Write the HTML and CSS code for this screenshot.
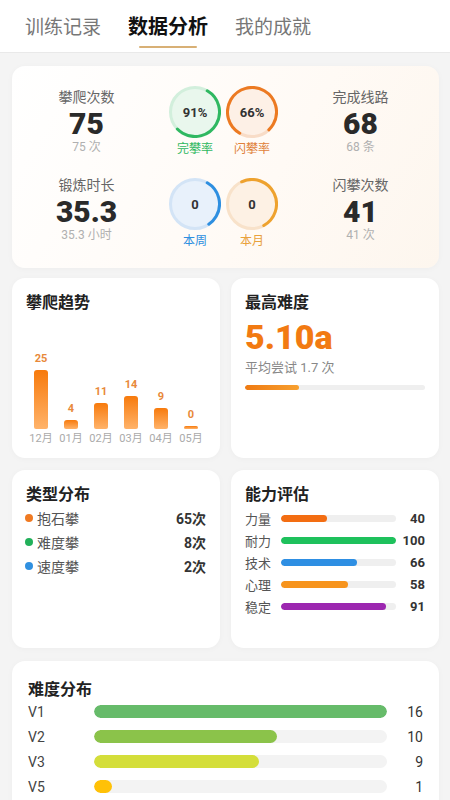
FILE: index.html
```html
<!DOCTYPE html>
<html lang="zh-CN">
<head>
  <meta charset="UTF-8">
  <meta name="viewport" content="width=device-width, initial-scale=1.0">
  <title>数据分析</title>
  <link rel="stylesheet" href="styles.css">
</head>
<body>
  <div class="tabs">
    <span class="tab">训练记录</span>
    <span class="tab active">数据分析</span>
    <span class="tab">我的成就</span>
  </div>

  <div class="page">
    <!-- 总览 -->
    <div class="card overview">
      <div class="stat">
        <div class="stat-label">攀爬次数</div>
        <div class="stat-num">75</div>
        <div class="stat-sub">75 次</div>
      </div>
      <div class="rings">
        <div class="ring green">
          <div class="ring-box">
            <svg class="ring-svg" viewBox="0 0 52 52">
              <circle class="ring-track" cx="26" cy="26" r="24.5"/>
              <circle class="ring-arc" cx="26" cy="26" r="24.5" stroke-dasharray="83.4 154" transform="rotate(-60 26 26)"/>
            </svg>
            <span class="ring-val">91%</span>
          </div>
          <div class="ring-label">完攀率</div>
        </div>
        <div class="ring orange">
          <div class="ring-box">
            <svg class="ring-svg" viewBox="0 0 52 52">
              <circle class="ring-track" cx="26" cy="26" r="24.5"/>
              <circle class="ring-arc" cx="26" cy="26" r="24.5" stroke-dasharray="121.9 154" transform="rotate(120 26 26)"/>
            </svg>
            <span class="ring-val">66%</span>
          </div>
          <div class="ring-label">闪攀率</div>
        </div>
      </div>
      <div class="stat">
        <div class="stat-label">完成线路</div>
        <div class="stat-num">68</div>
        <div class="stat-sub">68 条</div>
      </div>

      <div class="stat">
        <div class="stat-label">锻炼时长</div>
        <div class="stat-num">35.3</div>
        <div class="stat-sub">35.3 小时</div>
      </div>
      <div class="rings lower">
        <div class="ring blue">
          <div class="ring-box">
            <svg class="ring-svg" viewBox="0 0 52 52">
              <circle class="ring-track" cx="26" cy="26" r="24.5"/>
              <circle class="ring-arc" cx="26" cy="26" r="24.5" stroke-dasharray="49.2 154" transform="rotate(-60 26 26)"/>
            </svg>
            <span class="ring-val">0</span>
          </div>
          <div class="ring-label">本周</div>
        </div>
        <div class="ring amber">
          <div class="ring-box">
            <svg class="ring-svg" viewBox="0 0 52 52">
              <circle class="ring-track" cx="26" cy="26" r="24.5"/>
              <circle class="ring-arc" cx="26" cy="26" r="24.5" stroke-dasharray="74.8 154" transform="rotate(245 26 26)"/>
            </svg>
            <span class="ring-val">0</span>
          </div>
          <div class="ring-label">本月</div>
        </div>
      </div>
      <div class="stat">
        <div class="stat-label">闪攀次数</div>
        <div class="stat-num">41</div>
        <div class="stat-sub">41 次</div>
      </div>
    </div>

    <!-- 趋势 / 最高难度 -->
    <div class="row row-a">
      <div class="card half">
        <div class="card-title">攀爬趋势</div>
        <div class="chart">
          <div class="col"><span class="col-val">25</span><div class="col-bar" style="height: 59px"></div><span class="col-month">12月</span></div>
          <div class="col"><span class="col-val">4</span><div class="col-bar" style="height: 9px"></div><span class="col-month">01月</span></div>
          <div class="col"><span class="col-val">11</span><div class="col-bar" style="height: 26px"></div><span class="col-month">02月</span></div>
          <div class="col"><span class="col-val">14</span><div class="col-bar" style="height: 33px"></div><span class="col-month">03月</span></div>
          <div class="col"><span class="col-val">9</span><div class="col-bar" style="height: 21px"></div><span class="col-month">04月</span></div>
          <div class="col"><span class="col-val">0</span><div class="col-bar" style="height: 3px"></div><span class="col-month">05月</span></div>
        </div>
      </div>
      <div class="card half">
        <div class="card-title">最高难度</div>
        <div class="max-grade">5.10a</div>
        <div class="max-sub">平均尝试 1.7 次</div>
        <div class="track thin"><div class="fill grade-fill" style="width: 30%"></div></div>
      </div>
    </div>

    <!-- 类型 / 能力 -->
    <div class="row row-b">
      <div class="card half">
        <div class="card-title">类型分布</div>
        <div class="types">
          <div class="type-row"><span class="dot dot-orange"></span><span class="type-name">抱石攀</span><span class="type-val">65次</span></div>
          <div class="type-row"><span class="dot dot-green"></span><span class="type-name">难度攀</span><span class="type-val">8次</span></div>
          <div class="type-row"><span class="dot dot-blue"></span><span class="type-name">速度攀</span><span class="type-val">2次</span></div>
        </div>
      </div>
      <div class="card half">
        <div class="card-title">能力评估</div>
        <div class="skills">
          <div class="skill-row"><span class="skill-name">力量</span><div class="track skill-track"><div class="fill" style="width: 40%; background: #f36d12"></div></div><span class="skill-val">40</span></div>
          <div class="skill-row"><span class="skill-name">耐力</span><div class="track skill-track"><div class="fill" style="width: 100%; background: #1ec15c"></div></div><span class="skill-val">100</span></div>
          <div class="skill-row"><span class="skill-name">技术</span><div class="track skill-track"><div class="fill" style="width: 66%; background: #2e8fe3"></div></div><span class="skill-val">66</span></div>
          <div class="skill-row"><span class="skill-name">心理</span><div class="track skill-track"><div class="fill" style="width: 58%; background: #f7941d"></div></div><span class="skill-val">58</span></div>
          <div class="skill-row"><span class="skill-name">稳定</span><div class="track skill-track"><div class="fill" style="width: 91%; background: #9c27b0"></div></div><span class="skill-val">91</span></div>
        </div>
      </div>
    </div>

    <!-- 难度分布 -->
    <div class="card grades">
      <div class="card-title">难度分布</div>
      <div class="grade-row"><span class="grade-name">V1</span><div class="track grade-track"><div class="fill" style="width: 100%; background: #66bb6a"></div></div><span class="grade-val">16</span></div>
      <div class="grade-row"><span class="grade-name">V2</span><div class="track grade-track"><div class="fill" style="width: 62.5%; background: #8bc34a"></div></div><span class="grade-val">10</span></div>
      <div class="grade-row"><span class="grade-name">V3</span><div class="track grade-track"><div class="fill" style="width: 56.25%; background: #d4de3a"></div></div><span class="grade-val">9</span></div>
      <div class="grade-row"><span class="grade-name">V5</span><div class="track grade-track"><div class="fill" style="width: 6.25%; background: #ffc107"></div></div><span class="grade-val">1</span></div>
    </div>
  </div>
</body>
</html>
```

FILE: styles.css
```css
body, html {
  margin: 0;
  padding: 0;
  font-family: Roboto, "Noto Sans CJK SC", sans-serif;
  background: #f4f4f4;
  color: #333;
}

/* 顶部标签 */
.tabs {
  display: flex;
  align-items: center;
  gap: 27px;
  height: 52px;
  padding: 0 25px;
  background: #fff;
  border-bottom: 1px solid #e9e9e9;
}
.tab {
  position: relative;
  font-family: "Noto Sans CJK SC", sans-serif;
  font-size: 19px;
  color: #777;
  line-height: 26px;
}
.tab.active {
  font-size: 20px;
  font-weight: bold;
  color: #111;
}
.tab.active::after {
  content: "";
  position: absolute;
  left: 50%;
  bottom: -9px;
  width: 58px;
  height: 2px;
  margin-left: -29px;
  border-radius: 1px;
  background: #d8b075;
}

.page {
  padding: 13px 11px 0 12px;
}
.card {
  background: #fff;
  border-radius: 13px;
  box-shadow: 0 1px 6px rgba(0, 0, 0, 0.03);
  box-sizing: border-box;
}
.card-title {
  font-size: 16px;
  font-weight: bold;
  line-height: 22px;
  color: #222;
  font-family: "Noto Sans CJK SC", sans-serif;
}

/* 总览卡片 */
.overview {
  display: grid;
  grid-template-columns: 1fr auto 1fr;
  grid-template-rows: 71px 71px;
  column-gap: 20px;
  row-gap: 17px;
  align-items: center;
  height: 202px;
  padding: 20px 16px 0 12px;
  margin-bottom: 10px;
  background: linear-gradient(120deg, #ffffff 0%, #fffaf5 60%, #fdf6ee 100%);
}
.stat {
  text-align: center;
}
.stat-label {
  font-size: 14px;
  line-height: 18px;
  color: #666;
}
.stat-num {
  font-size: 30px;
  font-weight: 900;
  line-height: 30px;
  margin-top: 3px;
  color: #2a2a2a;
}
.stat-sub {
  font-size: 12px;
  line-height: 16px;
  color: #b0b0b0;
}
.rings {
  display: flex;
  gap: 5px;
  align-self: start;
}
.rings.lower {
  margin-top: 4px;
}
.ring {
  display: flex;
  flex-direction: column;
  align-items: center;
}
.ring-box {
  display: grid;
  place-items: center;
  width: 52px;
  height: 52px;
}
.ring-svg, .ring-val {
  grid-area: 1 / 1;
}
.ring-svg {
  width: 52px;
  height: 52px;
}
.ring-track {
  fill: var(--bg);
  stroke: var(--tr);
  stroke-width: 3;
}
.ring-arc {
  fill: none;
  stroke: var(--c);
  stroke-width: 3;
  stroke-linecap: round;
}
.ring-val {
  font-size: 13px;
  font-weight: bold;
  color: #333;
}
.ring-label {
  font-size: 12px;
  line-height: 16px;
  margin-top: 3px;
  color: var(--c);
}
.ring.green { --c: #2fb861; --bg: #e9f7ed; --tr: #d2efdc; }
.ring.orange { --c: #ec7a22; --bg: #fdf0e6; --tr: #f8dcc7; }
.ring.blue { --c: #2e8fe0; --bg: #e8f1fb; --tr: #d3e4f6; }
.ring.amber { --c: #eea22e; --bg: #fdf1e4; --tr: #f8e2ca; }
.ring.orange .ring-label { color: #e0813a; }
.ring.amber .ring-label { color: #e9a23c; }

/* 两列卡片 */
.row {
  display: grid;
  grid-template-columns: 1fr 1fr;
  gap: 11px;
}
.row-a {
  margin-bottom: 12px;
}
.row-b {
  margin-bottom: 13px;
}
.half {
  display: flex;
  flex-direction: column;
  height: 180px;
  padding: 12px 14px;
}
.row-b .half {
  height: 178px;
}

/* 柱状图 */
.chart {
  display: flex;
  align-items: flex-end;
  margin-top: auto;
}
.col {
  display: flex;
  flex-direction: column;
  align-items: center;
  width: 30px;
}
.col-val {
  font-size: 11px;
  font-weight: bold;
  line-height: 14px;
  margin-bottom: 4px;
  color: #e8893a;
}
.col-bar {
  width: 14px;
  border-radius: 3px 3px 2px 2px;
  background: linear-gradient(180deg, #f77a0c, #ffb36a);
}
.col-month {
  font-size: 11px;
  line-height: 14px;
  margin-top: 3px;
  color: #aaa;
}

/* 最高难度 */
.max-grade {
  font-size: 34px;
  font-weight: 900;
  line-height: 40px;
  margin-top: 5px;
  color: #f27a12;
}
.max-sub {
  font-size: 13px;
  line-height: 18px;
  margin-top: 2px;
  color: #888;
}
.track {
  background: #efefef;
  border-radius: 4px;
  overflow: hidden;
}
.fill {
  height: 100%;
  border-radius: 4px;
}
.track.thin {
  height: 5px;
  margin-top: 8px;
}
.grade-fill {
  background: linear-gradient(90deg, #ef7a12, #f7a030);
}

/* 类型分布 */
.types {
  margin-top: 2px;
}
.type-row {
  display: flex;
  align-items: center;
  height: 24px;
}
.dot {
  width: 8px;
  height: 8px;
  border-radius: 50%;
  margin: 0 4px 0 -1px;
}
.dot-orange { background: #f07a22; }
.dot-green { background: #22b05a; }
.dot-blue { background: #3090e0; }
.type-name {
  flex: 1;
  font-size: 14px;
  color: #555;
}
.type-val {
  font-size: 14px;
  font-weight: bold;
  color: #333;
}

/* 能力评估 */
.skills {
  margin-top: 3px;
}
.skill-row {
  display: flex;
  align-items: center;
  height: 22px;
}
.skill-name {
  width: 36px;
  font-size: 13px;
  color: #555;
}
.skill-track {
  width: 115px;
  height: 7px;
}
.skill-val {
  flex: 1;
  text-align: right;
  font-size: 13px;
  font-weight: bold;
  color: #333;
}

/* 难度分布 */
.grades {
  padding: 16px 16px 20px 16px;
  height: 160px;
}
.grade-row {
  display: flex;
  align-items: center;
  height: 25px;
}
.grade-name {
  width: 66px;
  font-size: 14px;
  color: #444;
}
.grade-track {
  width: 293px;
  height: 13px;
  border-radius: 7px;
  background: #f3f3f3;
}
.grade-track .fill {
  border-radius: 7px;
}
.grade-val {
  flex: 1;
  text-align: right;
  font-size: 14px;
  color: #333;
}
```
